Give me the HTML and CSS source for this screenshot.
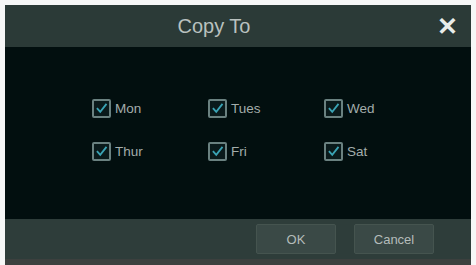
FILE: index.html
```html
<!DOCTYPE html>
<html lang="en">
<head>
  <meta charset="UTF-8" />
  <title>Copy To</title>
  <link rel="stylesheet" href="styles.css">
</head>
<body>
  <div class="dialog">
    <div class="dialog-header">
      <div class="dialog-title">Copy To</div>
      <div class="dialog-close">&#x2715;</div>
    </div>

    <div class="dialog-body">
      <div class="days">
        <label class="day"><span class="box"><svg viewBox="0 0 18 18"><path d="M3.5 8.5 L7.5 13 L15 3.5"/></svg></span>Mon</label>
        <label class="day"><span class="box"><svg viewBox="0 0 18 18"><path d="M3.5 8.5 L7.5 13 L15 3.5"/></svg></span>Tues</label>
        <label class="day"><span class="box"><svg viewBox="0 0 18 18"><path d="M3.5 8.5 L7.5 13 L15 3.5"/></svg></span>Wed</label>
        <label class="day"><span class="box"><svg viewBox="0 0 18 18"><path d="M3.5 8.5 L7.5 13 L15 3.5"/></svg></span>Thur</label>
        <label class="day"><span class="box"><svg viewBox="0 0 18 18"><path d="M3.5 8.5 L7.5 13 L15 3.5"/></svg></span>Fri</label>
        <label class="day"><span class="box"><svg viewBox="0 0 18 18"><path d="M3.5 8.5 L7.5 13 L15 3.5"/></svg></span>Sat</label>
      </div>
    </div>

    <div class="dialog-footer">
      <button class="btn">OK</button>
      <button class="btn">Cancel</button>
    </div>
  </div>
  <div class="bottom-strip"></div>
</body>
</html>
```

FILE: styles.css
```css
* {
  margin: 0;
  padding: 0;
  box-sizing: border-box;
}

body {
  font-family: 'Liberation Sans', Arial, sans-serif;
  background-color: #f6f7f7;
  padding: 5px 0 0 5px;
  width: 476px;
  height: 265px;
  overflow: hidden;
}

.dialog {
  width: 466px;
  background-color: #020f0f;
}

.dialog-header {
  height: 42px;
  display: flex;
  align-items: center;
  background-color: #2b3a37;
}

.dialog-title {
  flex: 1;
  text-align: center;
  color: #b9c1bf;
  font-size: 20px;
}

.dialog-close {
  width: 48px;
  color: #e8ecea;
  font-size: 25px;
  font-weight: bold;
  text-align: center;
  line-height: 1;
}

.dialog-body {
  height: 172px;
  padding: 52px 0 0 87px;
}

.days {
  display: grid;
  grid-template-columns: 116px 116px 116px;
  row-gap: 25px;
}

.day {
  display: flex;
  align-items: center;
  gap: 4px;
  color: #a3adab;
  font-size: 13.5px;
  height: 18px;
}

.box {
  width: 19px;
  height: 19px;
  border: 2px solid #6a8180;
  border-radius: 2px;
  background-color: #0a1a1b;
  display: flex;
}

.box svg {
  width: 100%;
  height: 100%;
  fill: none;
  stroke: #3aa3b4;
  stroke-width: 2.2;
}

.dialog-footer {
  height: 40px;
  background-color: #2e3d3a;
  display: flex;
  justify-content: flex-end;
  align-items: center;
  gap: 18px;
  padding-right: 37px;
}

.btn {
  width: 80px;
  height: 30px;
  background-color: #3a4946;
  border: 1px solid #45544f;
  border-radius: 2px;
  color: #b4bcba;
  font-family: 'Liberation Sans', Arial, sans-serif;
  font-size: 13px;
}

.bottom-strip {
  width: 466px;
  height: 6px;
  background-color: #3c403e;
}
```
